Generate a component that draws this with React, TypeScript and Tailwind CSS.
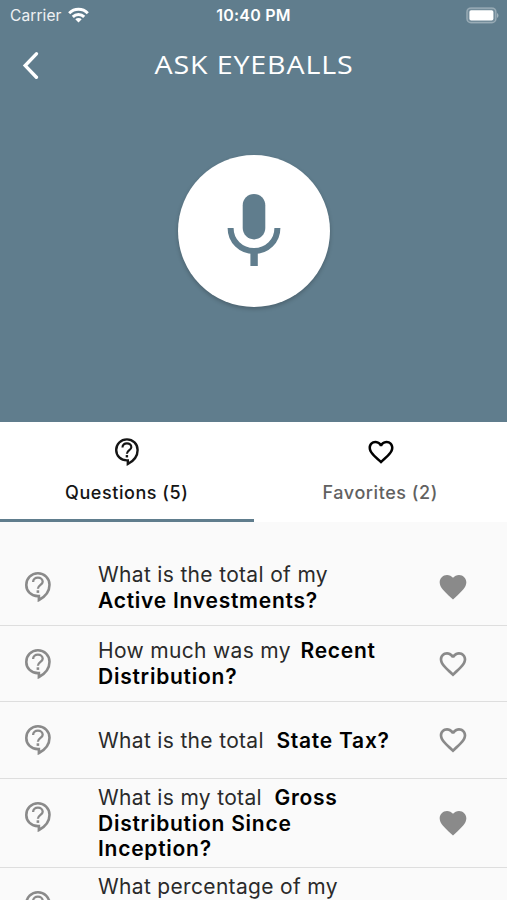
import { MdFavorite, MdFavoriteBorder } from "react-icons/md";

const questions = [
    { lines: [["What is the total of my", ""], ["", "Active Investments?"]], favorite: true, height: "h-[77px]" },
    { lines: [["How much was my\u00a0", "Recent"], ["", "Distribution?"]], favorite: false, height: "h-[76px]" },
    { lines: [["What is the total\u00a0 ", "State Tax?"]], favorite: false, height: "h-[77px]" },
    { lines: [["What is my total\u00a0 ", "Gross"], ["", "Distribution Since"], ["", "Inception?"]], favorite: true, height: "h-[89px]" },
    { lines: [["What percentage of my", ""]], favorite: false, height: "h-[38px]" },
]

function QuestionIcon({ className }: { className?: string }) {
    return (
        <svg className={className} viewBox="0 0 26 30" fill="none" stroke="currentColor">
            <path strokeWidth="2.6" d="M12.9 24.1 C6.3 24.1 1.3 19.2 1.3 12.9 C1.3 6.5 6.3 1.3 12.9 1.3 C19.4 1.3 24.5 6.2 24.5 12.7 C24.5 19.2 20.2 24.6 13.9 28 V24.1 Z" />
            <path strokeWidth="2.3" d="M8.1 10.1 C8.1 7.2 10.2 5.6 12.9 5.6 C15.6 5.6 17.7 7.3 17.7 9.8 C17.7 12.8 12.9 13.1 12.9 16.8" />
            <path strokeWidth="2.6" d="M12.9 18.3 V20.9" />
        </svg>
    )
}

export default function App(){
    return(
        <main className="flex h-[900px] w-[507px] flex-col overflow-hidden bg-[#fafafa] font-['Inter',sans-serif]">
            <div className="flex h-[422px] shrink-0 flex-col bg-[#607d8d] text-white">
                <div className="grid h-[29px] grid-cols-3 items-center pl-[10px] pr-[8px] leading-[29px]">
                    <div className="flex items-center gap-[6px]">
                        <span className="text-[15.5px] tracking-[0.1px] text-white/90">Carrier</span>
                        <svg className="h-[16px] w-[21px]" viewBox="0 0 21 16" fill="none" stroke="currentColor" strokeWidth="3">
                            <path d="M1.2 6.2 A13.2 13.2 0 0 1 19.8 6.2" />
                            <path d="M4.8 9.9 A8.2 8.2 0 0 1 16.2 9.9" />
                            <path fill="currentColor" stroke="none" d="M7.3 12.2 A4.6 4.6 0 0 1 13.7 12.2 L10.5 15.6 Z" />
                        </svg>
                    </div>
                    <span className="-ml-[2px] whitespace-nowrap pt-px text-center text-[16px] font-semibold tracking-[0.25px]">10:40 PM</span>
                    <svg className="h-[17px] w-[34px] justify-self-end" viewBox="0 0 34 17">
                        <rect x="1.9" y="0.9" width="29" height="14.8" rx="4" fill="white" fillOpacity="0.12" stroke="white" strokeOpacity="0.3" strokeWidth="1.5" />
                        <rect x="4.4" y="3.2" width="24" height="10.4" rx="1.8" fill="white" />
                        <path d="M32 6 C34 7 34 10 32 11 Z" fill="white" fillOpacity="0.4" />
                    </svg>
                </div>
                <div className="grid h-[70px] grid-cols-[100px_1fr_100px] items-center">
                    <svg className="ml-[22px] mt-[2px] h-[28px] w-[18px]" viewBox="0 0 18 28" fill="none" stroke="currentColor" strokeWidth="3.4" strokeLinecap="round">
                        <path d="M14.4 2.8 L3.2 14.6 L14.4 26.2" />
                    </svg>
                    <h1 className="ml-px scale-x-110 whitespace-nowrap text-center font-['Open_Sans',sans-serif] text-[26px] tracking-[0.8px]">ASK EYEBALLS</h1>
                </div>
                <div className="flex justify-center pt-[56px]">
                    <button className="flex size-[152px] items-center justify-center rounded-full bg-white text-[#607d8d] shadow-[0_2px_4px_rgba(0,0,0,0.22)]">
                        <svg className="mb-[2px] h-[72px] w-[54px]" viewBox="0 0 54 72">
                            <rect x="15.7" y="0" width="22.6" height="45.4" rx="11.3" fill="currentColor" />
                            <path d="M3.6 34 C3.6 47 13.8 57 27 57 C40.2 57 50.4 47 50.4 34" fill="none" stroke="currentColor" strokeWidth="6" />
                            <path d="M23.4 56 H30.8 V72 H23.4 Z" fill="currentColor" />
                        </svg>
                    </button>
                </div>
            </div>
            <div className="grid h-[100px] shrink-0 grid-cols-2 bg-white text-[18px] font-medium tracking-[0.55px]">
                <div className="flex flex-col items-center border-b-[3px] border-[#607d8d] text-[#151515]">
                    <QuestionIcon className="mt-[16px] h-[28px] w-[24px]" />
                    <span className="mt-[13px] leading-[28px]">Questions (5)</span>
                </div>
                <div className="flex flex-col items-center text-[#616161]">
                    <MdFavoriteBorder className="ml-px mt-[15px] size-[30px] text-black" />
                    <span className="mt-[12px] leading-[28px]">Favorites (2)</span>
                </div>
            </div>
            <div className="flex flex-col pt-[27px]">
                {questions.map((question, i) => (
                    <div key={i} className={`flex shrink-0 border-b border-[#dedede] ${question.height}`}>
                        <QuestionIcon className="ml-[25px] mt-[23px] h-[30px] w-[26px] shrink-0 text-[#8a8a8a]" />
                        <div className="ml-[47px] flex w-[341px] flex-col justify-center pt-px text-[21px] leading-[25.6px] tracking-[0.33px] text-[#2a2a2a]">
                            {question.lines.map(([text, strong], j) => (
                                <p key={j} className="whitespace-pre">{text}{i === 1 && j === 0 && <span className="tracking-[-2.5px]"> </span>}<b className="font-semibold tracking-[0.75px] text-black">{strong}</b></p>
                            ))}
                        </div>
                        {i < 4 && (
                            <div className="-ml-[2px] flex w-8 items-center text-[#8a8a8a]">
                                {question.favorite ? <MdFavorite className="size-8" /> : <MdFavoriteBorder className="size-8" />}
                            </div>
                        )}
                    </div>
                ))}
            </div>
        </main>
    )
}
